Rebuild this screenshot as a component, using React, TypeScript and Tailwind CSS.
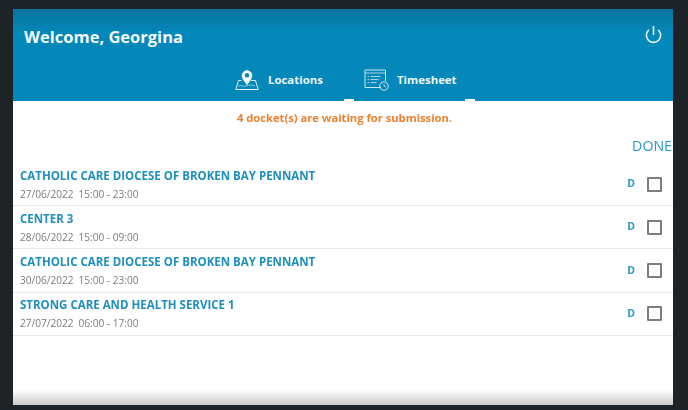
import React from 'react';
import { Power } from 'lucide-react';

const dockets = [
  { name: 'CATHOLIC CARE DIOCESE OF BROKEN BAY PENNANT', date: '27/06/2022', time: '15:00 - 23:00' },
  { name: 'CENTER 3', date: '28/06/2022', time: '15:00 - 09:00' },
  { name: 'CATHOLIC CARE DIOCESE OF BROKEN BAY PENNANT', date: '30/06/2022', time: '15:00 - 23:00' },
  { name: 'STRONG CARE AND HEALTH SERVICE 1', date: '27/07/2022', time: '06:00 - 17:00' },
];

function MapPinIcon() {
  return (
    <svg width="24" height="22" viewBox="0 0 24 22" fill="none" stroke="#e3f1f8" strokeWidth="1">
      <path d="M6.500 11.500H3.500L0.800 20.500H23.200L20.500 11.500H16" />
      <path d="M3 17c3-1.500 5 1 8 0s5-1.500 9 0" strokeWidth="0.6" />
      <path d="M12 15.500C9.500 12 7.200 9.500 7.200 6.500a4.800 4.800 0 0 1 9.600 0c0 3-2.300 5.500-4.800 9z" fill="#f4fafd" stroke="#f4fafd" />
      <circle cx="12" cy="6.300" r="2.200" fill="#0487b9" stroke="none" />
    </svg>
  );
}

function TimesheetIcon() {
  return (
    <svg width="25" height="22" viewBox="0 0 25 22" fill="none" stroke="#cfe6f1" strokeWidth="1">
      <path d="M17 18.500H1V1h20.500v11" />
      <path d="M1 4h20.500" strokeWidth="0.8" />
      <path d="M3.500 7.500h1.500M3.500 10.500h1.500M3.500 13.500h1.500M6.500 7.500h10M6.500 10.500h8M6.500 13.500h6" strokeWidth="0.8" />
      <circle cx="20" cy="17" r="4.200" />
      <path d="M20 14.500V17l1.800 1" strokeWidth="0.8" />
    </svg>
  );
}

export default function App() {
  return (
    <div className="h-[410px] w-[688px] bg-[#1e2327] pl-[13px] pr-[15px] pt-[9px] pb-[5px] font-['Open_Sans',sans-serif]">
      <div className="flex h-full flex-col bg-white blur-[0.35px]">
        <header className="relative h-[92px] shrink-0 bg-gradient-to-b from-[#06739d] via-[#0487b9] via-[25%] to-[#0487b9] text-white">
          <div className="flex items-start justify-between pl-[11px] pr-[10px] pt-[16px]">
            <h1 className="text-[16.500px] leading-[24px] font-bold text-[#f4fafd]">Welcome, Georgina</h1>
            <Power className="h-[19px] w-[19px] text-[#eef7fb]" strokeWidth={2} />
          </div>
          <nav className="mt-[20px] flex pl-[222px]">
            <div className="flex w-[129px] items-center">
              <MapPinIcon />
              <span className="ml-[9px] text-[11.400px] leading-[20px] font-bold text-[#eaf5fa]">Locations</span>
            </div>
            <div className="flex items-center">
              <TimesheetIcon />
              <span className="ml-[8px] text-[11.400px] leading-[20px] font-bold text-[#eaf5fa]">Timesheet</span>
            </div>
          </nav>
          <span className="absolute bottom-0 left-[331px] h-[2px] w-[10px] bg-white" />
          <span className="absolute bottom-0 left-[452px] h-[2px] w-[10px] bg-white" />
        </header>

        <p className="mt-[8px] pl-[3px] text-center text-[11.200px] leading-[18px] font-bold text-[#ef7f2d]">
          4 docket(s) are waiting for submission.
        </p>

        <div className="mt-[9px] flex h-[19px] justify-end pr-[1px]">
          <span className="text-[14.200px] leading-[19px] text-[#2a97c6]">DONE</span>
        </div>

        <ul className="mt-[8px]">
          {dockets.map((d, i) => (
            <li key={i} className="flex h-[43.200px] items-center justify-between border-b border-[#e8e8e8] pl-[7px] pr-[11px]">
              <div>
                <div className="text-[11.500px] leading-[18px] font-bold text-[#1f8fbd]">{d.name}</div>
                <div className="mt-[2px] text-[10.100px] leading-[15px] text-[#7d7d7d]">
                  {d.date}
                  <span className="ml-[5px]">{d.time}</span>
                </div>
              </div>
              <div className="flex items-center">
                <span className="text-[10.500px] font-bold text-[#2a97c6]">D</span>
                <span className="ml-[12px] h-[15px] w-[15px] rounded-[1px] border-2 border-[#7d7d7d] bg-white" />
              </div>
            </li>
          ))}
        </ul>

        <div className="mt-auto h-[15px] bg-gradient-to-b from-white to-[#c9c9c9]" />
      </div>
    </div>
  );
}
